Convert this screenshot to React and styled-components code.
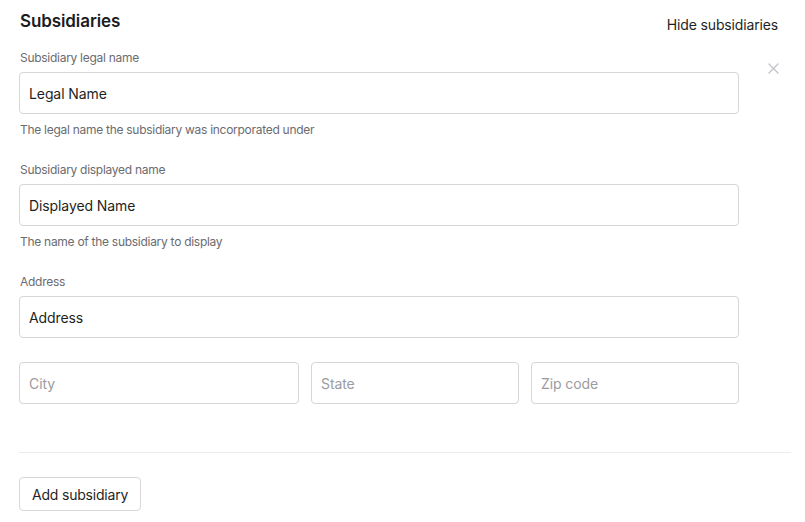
import React from "react";
import styled, { createGlobalStyle } from "styled-components";

const Global = createGlobalStyle`
  html, body { margin: 0; padding: 0; background: #ffffff; }
  body { font-family: Inter, "Noto Sans", sans-serif; color: #1f1f23; -webkit-font-smoothing: antialiased; }
  * { box-sizing: border-box; }
`;

const Page = styled.div`
  padding: 9px 14px 0 19px;
  width: 805px;
`;

const Header = styled.div`
  display: flex;
  justify-content: space-between;
  align-items: flex-start;
  padding-left: 1px;
`;

const Title = styled.h2`
  margin: 0;
  font-size: 17px;
  line-height: 24px;
  font-weight: 600;
  letter-spacing: -0.1px;
  color: #1c1c1f;
`;

const LinkButton = styled.button`
  border: 0;
  background: none;
  padding: 0;
  margin-top: 7px;
  margin-right: 13px;
  font-family: inherit;
  font-size: 14px;
  line-height: 17px;
  letter-spacing: -0.15px;
  color: #1f1f23;
  cursor: pointer;
`;

const Entry = styled.div`
  display: flex;
  align-items: flex-start;
  margin-top: 17px;
`;

const Form = styled.div`
  width: 720px;
  display: flex;
  flex-direction: column;
  gap: 24px;
`;

const Field = styled.div`
  display: flex;
  flex-direction: column;
`;

const Label = styled.label`
  font-size: 12px;
  line-height: 16px;
  letter-spacing: -0.28px;
  color: #6b6b70;
  padding-left: 1px;
  margin-bottom: 6px;
`;

const Input = styled.input`
  width: 100%;
  height: 42px;
  border: 1px solid #d5d5da;
  border-radius: 4px;
  padding: 0 9px;
  font-family: inherit;
  font-size: 14px;
  letter-spacing: -0.1px;
  color: #1f1f23;
  background: #fff;
  outline: none;
  &::placeholder { color: #9b9ba0; }
`;

const Help = styled.div`
  font-size: 12px;
  line-height: 16px;
  letter-spacing: -0.28px;
  color: #6b6b70;
  margin-top: 8px;
  padding-left: 1px;
`;

const Row = styled.div`
  display: grid;
  grid-template-columns: 280px 208px 208px;
  gap: 12px;
`;

const Remove = styled.button`
  border: 0;
  background: none;
  padding: 0;
  margin: 12px 0 0 28px;
  width: 12px;
  height: 12px;
  display: flex;
  align-items: center;
  justify-content: center;
  color: #c4c4c8;
  cursor: pointer;
`;

const Divider = styled.hr`
  border: 0;
  border-top: 1px solid #ececef;
  margin: 48px 0 24px 0;
`;

const Button = styled.button`
  height: 34px;
  padding: 0 12px;
  border: 1px solid #d8d8dc;
  border-radius: 4px;
  background: #fff;
  font-family: inherit;
  font-size: 14px;
  letter-spacing: -0.2px;
  color: #1f1f23;
  cursor: pointer;
`;

export default function App() {
  return (
    <>
      <Global />
      <Page>
        <Header>
          <Title>Subsidiaries</Title>
          <LinkButton>Hide subsidiaries</LinkButton>
        </Header>
        <Entry>
          <Form>
            <Field>
              <Label>Subsidiary legal name</Label>
              <Input defaultValue="Legal Name" />
              <Help>The legal name the subsidiary was incorporated under</Help>
            </Field>
            <Field>
              <Label>Subsidiary displayed name</Label>
              <Input defaultValue="Displayed Name" />
              <Help>The name of the subsidiary to display</Help>
            </Field>
            <Field>
              <Label>Address</Label>
              <Input defaultValue="Address" />
            </Field>
            <Row>
              <Input placeholder="City" />
              <Input placeholder="State" />
              <Input placeholder="Zip code" />
            </Row>
          </Form>
          <Remove aria-label="Remove">
            <svg width="11" height="11" viewBox="0 0 11 11" fill="none" stroke="currentColor" strokeWidth="1.4" strokeLinecap="round">
              <path d="M1 1L10 10M10 1L1 10" />
            </svg>
          </Remove>
        </Entry>
        <Divider />
        <Button>Add subsidiary</Button>
      </Page>
    </>
  );
}
